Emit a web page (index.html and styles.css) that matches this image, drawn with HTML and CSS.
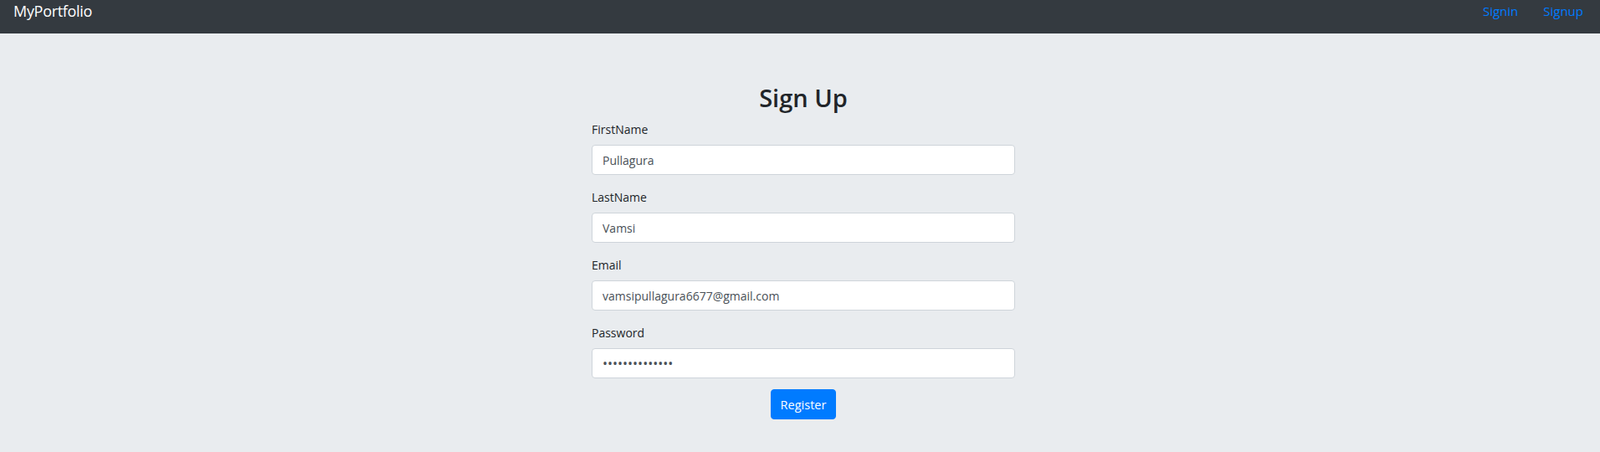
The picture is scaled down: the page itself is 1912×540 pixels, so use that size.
FILE: index.html
```html
<!DOCTYPE html>
<html lang="en">
<head>
<meta charset="utf-8">
<title>MyPortfolio - Sign Up</title>
<link rel="stylesheet" href="styles.css">
</head>
<body>
<nav class="navbar">
  <a class="brand" href="#">MyPortfolio</a>
  <div class="nav-links">
    <a class="nav-link" href="#">Signin</a>
    <a class="nav-link" href="#">Signup</a>
  </div>
</nav>
<main class="page">
  <form class="signup">
    <h2 class="title">Sign Up</h2>
    <div class="form-group">
      <label class="label" for="fn">FirstName</label>
      <input class="control" id="fn" type="text" value="Pullagura">
    </div>
    <div class="form-group">
      <label class="label" for="ln">LastName</label>
      <input class="control" id="ln" type="text" value="Vamsi">
    </div>
    <div class="form-group">
      <label class="label" for="em">Email</label>
      <input class="control" id="em" type="email" value="vamsipullagura6677@gmail.com">
    </div>
    <div class="form-group form-group-last">
      <label class="label" for="pw">Password</label>
      <input class="control control-password" id="pw" type="password" value="vamsi123456789">
    </div>
    <div class="actions">
      <button class="btn" type="button">Register</button>
    </div>
  </form>
</main>
</body>
</html>
```
FILE: styles.css
```css
* { box-sizing: border-box; }
html, body { margin: 0; padding: 0; }
body {
  font-family: "Open Sans", "Noto Sans", sans-serif;
  background: #e9ecef;
  color: #212529;
  height: 540px;
  overflow: hidden;
}
.navbar {
  height: 40px;
  background: #343a40;
  display: flex;
  justify-content: space-between;
  align-items: flex-start;
  padding: 0 16px;
}
.brand {
  color: #fff;
  text-decoration: none;
  font-size: 18px;
  line-height: 26px;
  letter-spacing: -0.3px;
}
.nav-links {
  display: flex;
  gap: 30px;
  padding-top: 1px;
  padding-right: 4px;
}
.nav-link {
  color: #007bff;
  text-decoration: none;
  font-size: 15px;
  line-height: 24px;
}
.page {
  padding-top: 60px;
}
.signup {
  width: 506px;
  margin: 0 auto;
  position: relative;
  left: 4px;
}
.title {
  margin: 0 0 10px;
  text-align: center;
  font-size: 29px;
  font-weight: 600;
  line-height: 34px;
}
.form-group {
  margin-bottom: 16px;
}
.form-group-last {
  margin-bottom: 13px;
}
.label {
  display: block;
  font-size: 14px;
  line-height: 21px;
  margin-bottom: 8px;
  color: #212529;
}
.control {
  display: block;
  width: 100%;
  height: 36px;
  padding: 0 12px;
  font-family: inherit;
  font-size: 14px;
  color: #495057;
  background: #fff;
  border: 1px solid #ced4da;
  border-radius: 4px;
  outline: none;
}
.control-password {
  font-size: 16px;
}
.actions {
  display: flex;
  justify-content: center;
}
.btn {
  height: 36px;
  padding: 0 11px;
  font-family: inherit;
  font-size: 14.5px;
  color: #fff;
  background: #007bff;
  border: 1px solid #007bff;
  border-radius: 4px;
}
```
